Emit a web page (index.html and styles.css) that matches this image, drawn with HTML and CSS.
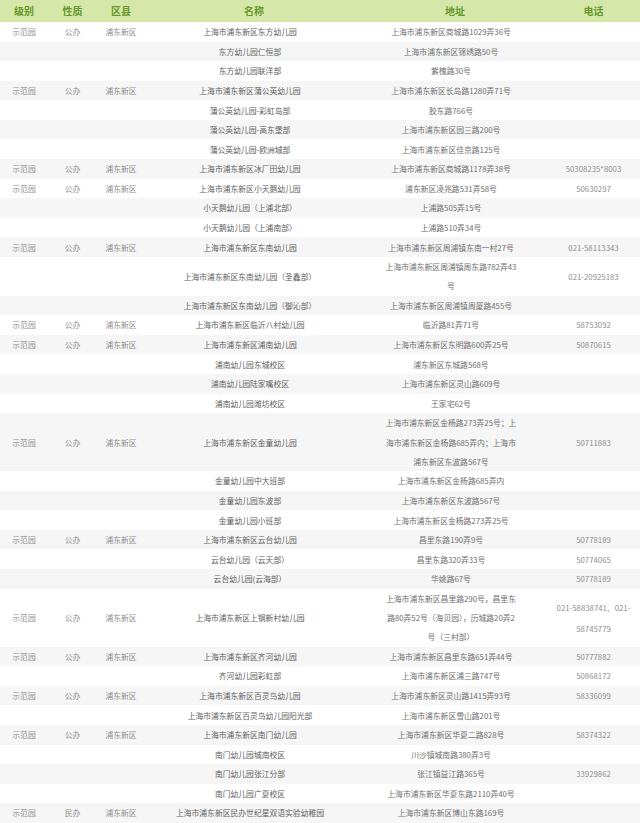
FILE: index.html
```html
<!DOCTYPE html>
<html lang="zh-CN">
<head>
<meta charset="utf-8">
<title>浦东新区示范幼儿园</title>
<link rel="stylesheet" href="styles.css">
</head>
<body>
<table class="kg-table">
  <colgroup>
    <col class="c-level"><col class="c-type"><col class="c-area"><col class="c-name"><col class="c-addr"><col class="c-tel">
  </colgroup>
  <thead>
    <tr class="head-row">
      <th>级别</th><th>性质</th><th>区县</th><th class="th-name">名称</th><th class="th-addr">地址</th><th>电话</th>
    </tr>
  </thead>
  <tbody>
    <tr><td class="meta">示范园</td><td class="meta">公办</td><td class="meta">浦东新区</td><td class="name">上海市浦东新区东方幼儿园</td><td class="addr">上海市浦东新区商城路1029弄36号</td><td class="tel"></td></tr>
    <tr><td></td><td></td><td></td><td class="name">东方幼儿园仁恒部</td><td class="addr">上海市浦东新区锦绣路50号</td><td class="tel"></td></tr>
    <tr><td></td><td></td><td></td><td class="name">东方幼儿园联洋部</td><td class="addr">紫槐路30号</td><td class="tel"></td></tr>
    <tr><td class="meta">示范园</td><td class="meta">公办</td><td class="meta">浦东新区</td><td class="name">上海市浦东新区蒲公英幼儿园</td><td class="addr">上海市浦东新区长岛路1280弄71号</td><td class="tel"></td></tr>
    <tr><td></td><td></td><td></td><td class="name">蒲公英幼儿园-彩虹岛部</td><td class="addr">胶东路766号</td><td class="tel"></td></tr>
    <tr><td></td><td></td><td></td><td class="name">蒲公英幼儿园-高东堡部</td><td class="addr">上海市浦东新区园三路200号</td><td class="tel"></td></tr>
    <tr><td></td><td></td><td></td><td class="name">蒲公英幼儿园-欧洲城部</td><td class="addr">上海市浦东新区佳京路125号</td><td class="tel"></td></tr>
    <tr><td class="meta">示范园</td><td class="meta">公办</td><td class="meta">浦东新区</td><td class="name">上海市浦东新区冰厂田幼儿园</td><td class="addr">上海市浦东新区商城路1178弄38号</td><td class="tel">50308235*8003</td></tr>
    <tr><td class="meta">示范园</td><td class="meta">公办</td><td class="meta">浦东新区</td><td class="name">上海市浦东新区小天鹅幼儿园</td><td class="addr">浦东新区凌兆路531弄58号</td><td class="tel">50630297</td></tr>
    <tr><td></td><td></td><td></td><td class="name">小天鹅幼儿园（上浦北部）</td><td class="addr">上浦路505弄15号</td><td class="tel"></td></tr>
    <tr><td></td><td></td><td></td><td class="name">小天鹅幼儿园（上浦南部）</td><td class="addr">上浦路510弄34号</td><td class="tel"></td></tr>
    <tr><td class="meta">示范园</td><td class="meta">公办</td><td class="meta">浦东新区</td><td class="name">上海市浦东新区东南幼儿园</td><td class="addr">上海市浦东新区周浦镇东南一村27号</td><td class="tel">021-58113343</td></tr>
    <tr><td></td><td></td><td></td><td class="name">上海市浦东新区东南幼儿园（圣鑫部）</td><td class="addr">上海市浦东新区周浦镇周东路782弄43<br>号</td><td class="tel">021-20925183</td></tr>
    <tr><td></td><td></td><td></td><td class="name">上海市浦东新区东南幼儿园（御沁部）</td><td class="addr">上海市浦东新区周浦镇周厦路455号</td><td class="tel"></td></tr>
    <tr><td class="meta">示范园</td><td class="meta">公办</td><td class="meta">浦东新区</td><td class="name">上海市浦东新区临沂八村幼儿园</td><td class="addr">临沂路81弄71号</td><td class="tel">58753092</td></tr>
    <tr><td class="meta">示范园</td><td class="meta">公办</td><td class="meta">浦东新区</td><td class="name">上海市浦东新区浦南幼儿园</td><td class="addr">上海市浦东新区东明路600弄25号</td><td class="tel">50870615</td></tr>
    <tr><td></td><td></td><td></td><td class="name">浦南幼儿园东城校区</td><td class="addr">浦东新区东城路568号</td><td class="tel"></td></tr>
    <tr><td></td><td></td><td></td><td class="name">浦南幼儿园陆家嘴校区</td><td class="addr">上海市浦东新区灵山路609号</td><td class="tel"></td></tr>
    <tr><td></td><td></td><td></td><td class="name">浦南幼儿园潍坊校区</td><td class="addr">王家宅62号</td><td class="tel"></td></tr>
    <tr><td class="meta">示范园</td><td class="meta">公办</td><td class="meta">浦东新区</td><td class="name">上海市浦东新区金童幼儿园</td><td class="addr">上海市浦东新区金杨路273弄25号；上<br>海市浦东新区金杨路685弄内；上海市<br>浦东新区东波路567号</td><td class="tel">50711883</td></tr>
    <tr><td></td><td></td><td></td><td class="name">金童幼儿园中大班部</td><td class="addr">上海市浦东新区金杨路685弄内</td><td class="tel"></td></tr>
    <tr><td></td><td></td><td></td><td class="name">金童幼儿园东波部</td><td class="addr">上海市浦东新区东波路567号</td><td class="tel"></td></tr>
    <tr><td></td><td></td><td></td><td class="name">金童幼儿园小班部</td><td class="addr">上海市浦东新区金杨路273弄25号</td><td class="tel"></td></tr>
    <tr><td class="meta">示范园</td><td class="meta">公办</td><td class="meta">浦东新区</td><td class="name">上海市浦东新区云台幼儿园</td><td class="addr">昌里东路190弄9号</td><td class="tel">50778189</td></tr>
    <tr><td></td><td></td><td></td><td class="name">云台幼儿园（云天部）</td><td class="addr">昌里东路320弄33号</td><td class="tel">50774065</td></tr>
    <tr><td></td><td></td><td></td><td class="name">云台幼儿园(云海部）</td><td class="addr">华姚路67号</td><td class="tel">50778189</td></tr>
    <tr><td class="meta">示范园</td><td class="meta">公办</td><td class="meta">浦东新区</td><td class="name">上海市浦东新区上钢新村幼儿园</td><td class="addr">上海市浦东新区昌里路290号，昌里东<br>路80弄52号（海贝园），历城路20弄2<br>号（三村部）</td><td class="tel tel-multi">021-58838741、021-<br>58745779</td></tr>
    <tr><td class="meta">示范园</td><td class="meta">公办</td><td class="meta">浦东新区</td><td class="name">上海市浦东新区齐河幼儿园</td><td class="addr">上海市浦东新区昌里东路651弄44号</td><td class="tel">50777882</td></tr>
    <tr><td></td><td></td><td></td><td class="name">齐河幼儿园彩虹部</td><td class="addr">上海市浦东新区浦三路747号</td><td class="tel">50868172</td></tr>
    <tr><td class="meta">示范园</td><td class="meta">公办</td><td class="meta">浦东新区</td><td class="name">上海市浦东新区百灵鸟幼儿园</td><td class="addr">上海市浦东新区灵山路1415弄93号</td><td class="tel">58336099</td></tr>
    <tr><td></td><td></td><td></td><td class="name">上海市浦东新区百灵鸟幼儿园阳光部</td><td class="addr">上海市浦东新区雪山路201号</td><td class="tel"></td></tr>
    <tr><td class="meta">示范园</td><td class="meta">公办</td><td class="meta">浦东新区</td><td class="name">上海市浦东新区南门幼儿园</td><td class="addr">上海市浦东新区华夏二路828号</td><td class="tel">58374322</td></tr>
    <tr><td></td><td></td><td></td><td class="name">南门幼儿园城南校区</td><td class="addr">川沙镇城南路380弄3号</td><td class="tel"></td></tr>
    <tr><td></td><td></td><td></td><td class="name">南门幼儿园张江分部</td><td class="addr">张江镇益江路365号</td><td class="tel">33929862</td></tr>
    <tr><td></td><td></td><td></td><td class="name">南门幼儿园广夏校区</td><td class="addr">上海市浦东新区华夏东路2110弄40号</td><td class="tel"></td></tr>
    <tr><td class="meta">示范园</td><td class="meta">民办</td><td class="meta">浦东新区</td><td class="name">上海市浦东新区民办世纪星双语实验幼稚园</td><td class="addr">上海市浦东新区博山东路169号</td><td class="tel"></td></tr>
  </tbody>
</table>
</body>
</html>
```

FILE: styles.css
```css
html, body {
  margin: 0;
  padding: 0;
  background: #ffffff;
}

body {
  font-family: "Noto Sans CJK SC", "Noto Sans", sans-serif;
}

.kg-table {
  width: 640px;
  table-layout: fixed;
  border-collapse: collapse;
  border-spacing: 0;
}

.c-level { width: 48px; }
.c-type  { width: 49px; }
.c-area  { width: 48px; }
.c-name  { width: 210px; }
.c-addr  { width: 192px; }
.c-tel   { width: 93px; }

.head-row {
  background: #d5e8a9;
}

.head-row th {
  height: 22px;
  padding: 0;
  font-size: 10px;
  font-weight: bold;
  line-height: 22px;
  color: #67972a;
  text-align: center;
  vertical-align: middle;
}

.head-row .th-name,
.head-row .th-addr {
  padding-left: 8px;
}

.kg-table td {
  padding: 0.2px 0;
  font-size: 7.8px;
  line-height: 19.2px;
  text-align: center;
  vertical-align: middle;
  white-space: nowrap;
  color: #7a7a7a;
}

.kg-table tbody tr:nth-child(even) {
  background: #f6f6f6;
}

.kg-table td.meta {
  color: #8e8e8e;
}

.kg-table td.name {
  color: #5e5e5e;
}

.kg-table td.addr {
  color: #6e6e6e;
}

.kg-table td.tel {
  color: #8e8e8e;
}

.kg-table td.tel-multi {
  line-height: 21px;
}
```
